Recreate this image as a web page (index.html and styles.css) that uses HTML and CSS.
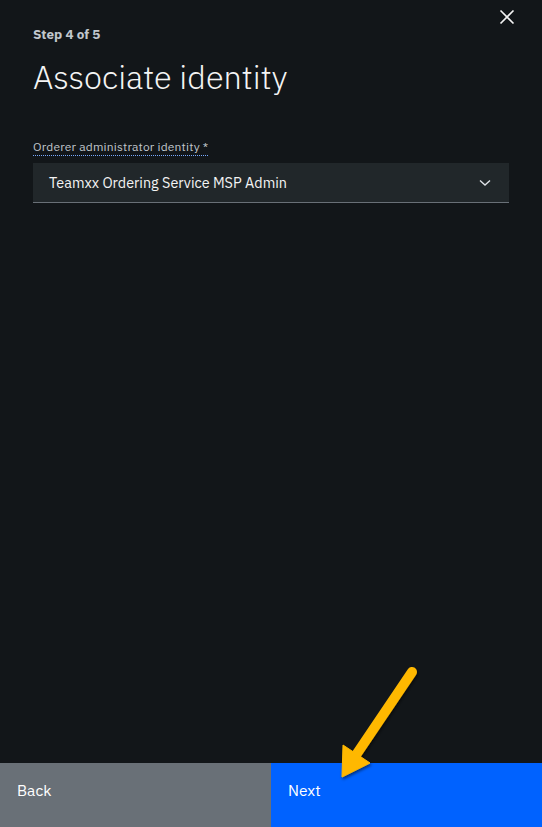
FILE: index.html
```html
<!DOCTYPE html>
<html>
<head>
<meta charset="utf-8">
<link rel="stylesheet" href="styles.css">
</head>
<body>
<div class="panel">
  <button class="close" aria-label="Close">
    <svg width="16" height="16" viewBox="0 0 16 16"><path d="M1.5 1.5 L14.5 14.5 M14.5 1.5 L1.5 14.5" stroke="#f4f4f4" stroke-width="1.6" fill="none"/></svg>
  </button>
  <main class="content">
    <div class="step">Step 4 of 5</div>
    <h1 class="title">Associate identity</h1>
    <div class="field">
      <label class="label"><span class="tip">Orderer administrator identity *</span></label>
      <div class="select">
        <span class="value">Teamxx Ordering Service MSP Admin</span>
        <svg class="chev" width="12" height="8" viewBox="0 0 12 8"><path d="M1 1.5 L6 6 L11 1.5" stroke="#dde1e6" stroke-width="1.4" fill="none"/></svg>
      </div>
    </div>
  </main>
  <footer class="footer">
    <button class="btn back">Back</button>
    <button class="btn next">Next</button>
  </footer>
  <svg class="arrow" width="110" height="130" viewBox="0 0 110 130">
    <defs>
      <filter id="sh" x="-20%" y="-20%" width="140%" height="140%">
        <feDropShadow dx="1" dy="2" stdDeviation="1.5" flood-color="#000" flood-opacity="0.5"/>
      </filter>
    </defs>
    <g filter="url(#sh)" fill="#ffb800" stroke="#ffb800">
      <line x1="92" y1="17" x2="36" y2="100" stroke-width="10" stroke-linecap="round"/>
      <polygon points="23,90 50,108 22,122" stroke-width="1" stroke-linejoin="round"/>
    </g>
  </svg>
</div>
</body>
</html>
```

FILE: styles.css
```css
* { box-sizing: border-box; }
html, body { margin: 0; padding: 0; }
body {
  width: 542px;
  height: 827px;
  background: #121619;
  font-family: "IBM Plex Sans", "Noto Sans", "Open Sans", sans-serif;
  overflow: hidden;
}
.panel {
  position: relative;
  width: 542px;
  height: 827px;
  display: flex;
  flex-direction: column;
}
.close {
  position: absolute;
  top: 9px;
  right: 27px;
  width: 16px;
  height: 16px;
  padding: 0;
  border: 0;
  background: transparent;
  display: flex;
}
.content {
  flex: 1;
  padding: 25px 33px 0 33px;
}
.step {
  font-size: 13.5px;
  font-weight: 700;
  color: #c1c7cd;
  line-height: 18px;
}
.title {
  margin: 14px 0 0 0;
  font-size: 32.5px;
  font-weight: 300;
  line-height: 40px;
  color: #f4f4f4;
}
.field {
  margin-top: 42px;
}
.label {
  display: block;
  font-size: 12px;
  line-height: 16px;
  color: #c1c7cd;
  letter-spacing: 0.2px;
}
.tip {
  border-bottom: 1px dotted #78a9ff;
  padding-bottom: 1px;
}
.select {
  margin-top: 8px;
  width: 476px;
  height: 40px;
  background: #21272a;
  border-bottom: 1px solid #697077;
  display: flex;
  align-items: center;
  justify-content: space-between;
  padding: 0 18px 0 16px;
}
.value {
  font-size: 14.4px;
  color: #f4f4f4;
}
.footer {
  height: 64px;
  display: flex;
}
.btn {
  flex: 1;
  border: 0;
  margin: 0;
  font-family: inherit;
  font-size: 15.5px;
  color: #ffffff;
  text-align: left;
  padding: 0 16px 10px 17px;
}
.back { background: #697077; }
.next { background: #0062ff; }
.arrow {
  position: absolute;
  left: 320px;
  top: 655px;
}
```
